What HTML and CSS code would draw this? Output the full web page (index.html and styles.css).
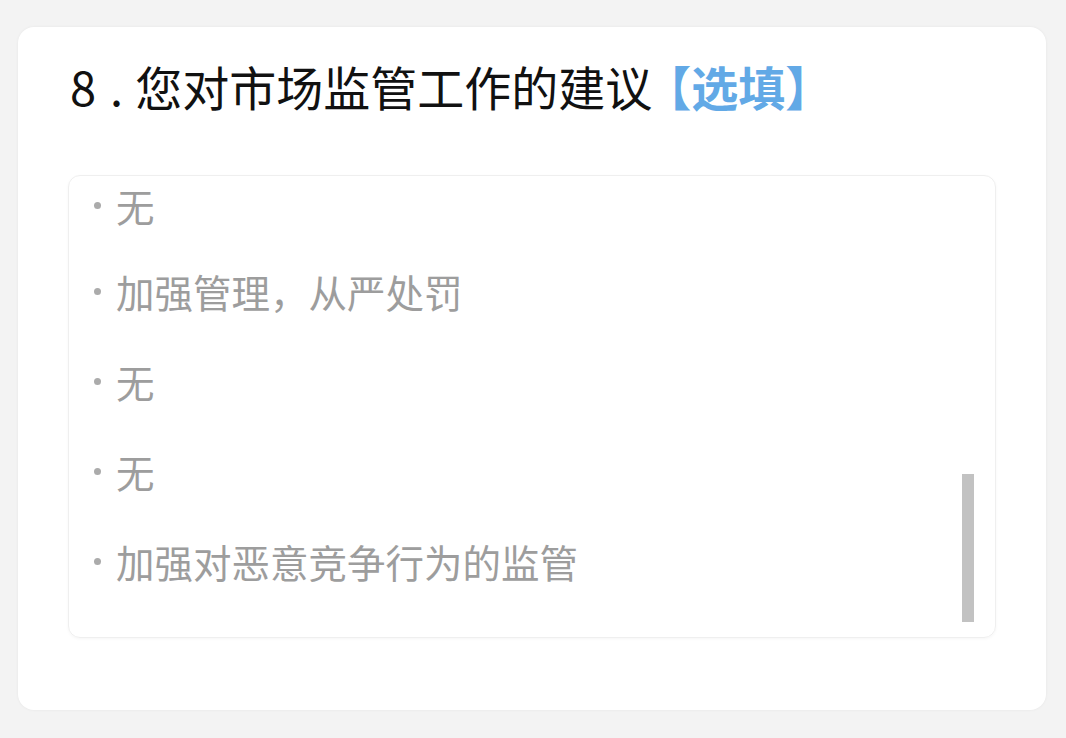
FILE: index.html
```html
<!DOCTYPE html>
<html lang="zh-CN">
  <head>
    <meta charset="UTF-8" />
    <meta name="viewport" content="width=device-width, initial-scale=1.0" />
    <title>市场监管建议</title>
    <link rel="stylesheet" href="styles.css">
  </head>
  <body>
    <div class="question-card">
      <h2 class="question-title">8<span class="dot">.</span>您对市场监管工作的建议<span class="optional">【选填】</span></h2>
      <div class="answer-box">
        <ul class="answer-list">
          <li>无</li>
          <li>加强管理，从严处罚</li>
          <li>无</li>
          <li>无</li>
          <li>加强对恶意竞争行为的监管</li>
        </ul>
        <div class="scroll-thumb"></div>
      </div>
    </div>
  </body>
</html>
```

FILE: styles.css
```css
body {
  margin: 0;
  padding: 27px 20px 28px 18px;
  background-color: #f3f3f3;
  font-family: "Noto Sans CJK SC", "Noto Sans", sans-serif;
}
.question-card {
  width: 1028px;
  height: 683px;
  box-sizing: border-box;
  padding: 26px 50px 0 50px;
  background-color: #fff;
  border-radius: 16px;
  box-shadow: 0 0 3px rgba(0, 0, 0, 0.06);
}
.question-title {
  margin: 0 0 0 2px;
  font-size: 47px;
  font-weight: normal;
  line-height: 66px;
  color: #111;
}
.dot {
  margin: 0 12px 0 14px;
}
.optional {
  color: #62a9e6;
  font-weight: bold;
  margin-left: -8px;
}
.answer-box {
  position: relative;
  margin-top: 56px;
  width: 928px;
  height: 463px;
  box-sizing: border-box;
  border: 1px solid #efefef;
  border-radius: 12px;
  box-shadow: 0 1px 3px rgba(0, 0, 0, 0.04);
  overflow: hidden;
}
.answer-list {
  list-style: none;
  margin: 0;
  padding: 4px 0 0 25px;
}
.answer-list li {
  display: flex;
  align-items: center;
  height: 50px;
  margin-bottom: 40px;
  font-size: 38.5px;
  line-height: 1;
  color: #9d9d9d;
}
.answer-list li:first-child {
  margin-bottom: 36px;
}
.answer-list li::before {
  content: "";
  width: 7px;
  height: 7px;
  margin-right: 15px;
  border-radius: 50%;
  background-color: #ababab;
}
.scroll-thumb {
  position: absolute;
  right: 21px;
  top: 298px;
  width: 12px;
  height: 148px;
  background-color: #c2c2c2;
}
```
